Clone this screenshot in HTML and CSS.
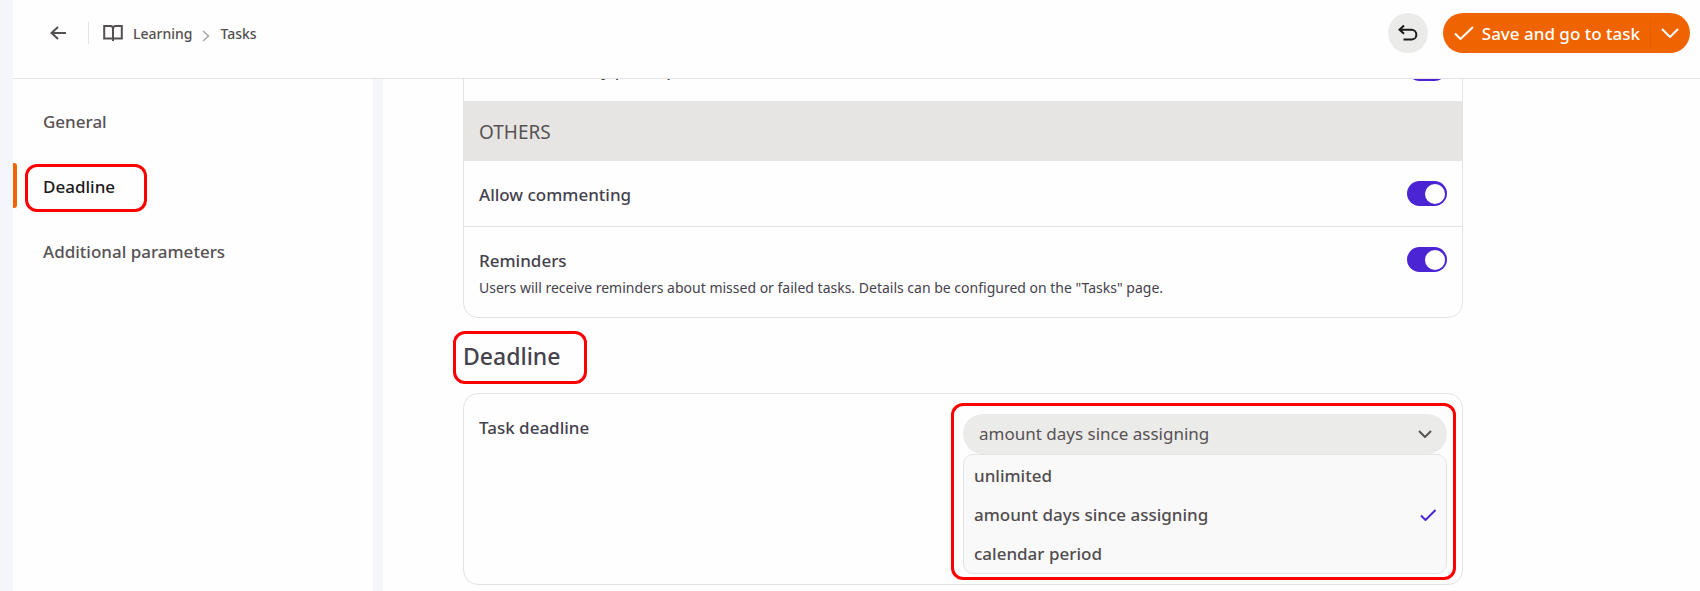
FILE: index.html
```html
<!DOCTYPE html>
<html lang="en">
<head>
    <meta charset="UTF-8">
    <meta name="viewport" content="width=device-width, initial-scale=1.0">
    <title>Tasks</title>
    <link rel="stylesheet" href="styles.css">
</head>
<body>
    <div class="page">
        <header class="header">
            <div class="header-left">
                <button class="back" type="button" aria-label="Back">
                    <svg width="16" height="14" viewBox="0 0 16 14"><path d="M16 7H1.500M8 1L1.500 7l6.500 6"/></svg>
                </button>
                <nav class="breadcrumbs" aria-label="Breadcrumbs">
                    <svg class="book" width="20" height="18" viewBox="0 0 20 18"><path d="M1.200 2H7.500a2.500 2.500 0 0 1 2.500 2.500V15.500a1.500 1.500 0 0 0-1.500-1H1.200zM18.800 2H12.500a2.500 2.500 0 0 0-2.500 2.500V15.500a1.500 1.500 0 0 1 1.500-1h7.300zM10 14.500v2.500"/></svg>
                    <a href="#">Learning</a>
                    <svg class="crumb-sep" width="8" height="12" viewBox="0 0 8 12"><path d="M1 1l5.500 5L1 11"/></svg>
                    <a href="#">Tasks</a>
                </nav>
            </div>
            <div class="header-right">
                <button class="undo" type="button" aria-label="Undo">
                    <svg width="20" height="18" viewBox="0 0 20 18"><path d="M6 1.500L1.500 5.800l4.500 4M1.500 5.800H13.500a4.800 4.800 0 0 1 0 9.700H5.500"/></svg>
                </button>
                <div class="save-group">
                    <button class="save" type="button">
                        <svg width="20" height="14" viewBox="0 0 20 14"><path d="M1 7.500l5.500 5.500L19 1"/></svg>
                        Save and go to task
                    </button>
                    <button class="save-more" type="button" aria-label="More save options">
                        <svg width="18" height="10" viewBox="0 0 18 10"><path d="M1 1l8 8 8-8"/></svg>
                    </button>
                </div>
            </div>
        </header>

        <div class="layout">
            <nav class="sidebar" aria-label="Sections">
                <a class="side-link" href="#general">General</a>
                <a class="side-link active" href="#deadline">Deadline</a>
                <a class="side-link" href="#additional">Additional parameters</a>
            </nav>

            <main class="content">
                <div class="column">
                    <!-- scrolled partly under the header -->
                    <section class="card card-scrolled">
                        <div class="row">
                            <label class="label" for="confirmation">Confirmation by participants</label>
                            <input class="toggle" type="checkbox" id="confirmation" checked>
                        </div>
                        <h3 class="group">OTHERS</h3>
                        <div class="row">
                            <label class="label" for="commenting">Allow commenting</label>
                            <input class="toggle" type="checkbox" id="commenting" checked>
                        </div>
                        <div class="row row-line">
                            <div>
                                <label class="label" for="reminders">Reminders</label>
                                <p class="hint">Users will receive reminders about missed or failed tasks. Details can be configured on the "Tasks" page.</p>
                            </div>
                            <input class="toggle" type="checkbox" id="reminders" checked>
                        </div>
                    </section>

                    <h2 class="title" id="deadline"><span class="title-mark">Deadline</span></h2>

                    <section class="card">
                        <div class="row row-select">
                            <label class="label" for="task-deadline">Task deadline</label>
                            <div class="dropdown">
                                <div class="select-box">
                                    <select class="select" id="task-deadline">
                                        <option>unlimited</option>
                                        <option selected>amount days since assigning</option>
                                        <option>calendar period</option>
                                    </select>
                                    <svg class="select-arrow" width="14" height="8" viewBox="0 0 14 8"><path d="M1 1l6 6 6-6"/></svg>
                                </div>
                                <ul class="menu">
                                    <li>unlimited</li>
                                    <li>amount days since assigning
                                        <svg width="16" height="12" viewBox="0 0 16 12"><path d="M1 6.500l4.500 4.500L15.500 1"/></svg>
                                    </li>
                                    <li>calendar period</li>
                                </ul>
                            </div>
                        </div>
                    </section>
                </div>
            </main>
        </div>
    </div>
</body>
</html>
```

FILE: styles.css
```css
*,
*::before,
*::after {
    box-sizing: border-box;
}
body {
    margin: 0;
    padding-left: 13px;
    background: #f5f6fb;
    color: #45424d;
    font-family: "Noto Sans", "Open Sans", sans-serif;
    font-size: 17px;
    line-height: 25px;
}
a {
    color: inherit;
    text-decoration: none;
}
button {
    padding: 0;
    border: none;
    background: none;
    color: inherit;
    font: inherit;
    cursor: pointer;
}
svg {
    display: block;
    flex: none;
    fill: none;
    stroke: currentColor;
    stroke-width: 2;
}
.page {
    display: flex;
    flex-direction: column;
    height: 100vh;
}

/* header */
.header {
    display: flex;
    justify-content: space-between;
    align-items: flex-start;
    height: 79px;
    padding: 13px 10px 0 37px;
    background: #fefefe;
    border-bottom: 1px solid #e3e3e3;
}
.header-left,
.header-right,
.breadcrumbs {
    display: flex;
    align-items: center;
}
.header-left {
    height: 40px;
    color: #544f51;
}
.back {
    padding-right: 22px;
}
.breadcrumbs {
    gap: 10px;
    height: 22px;
    padding-left: 14px;
    border-left: 1px solid #e3e3e3;
    font-size: 14px;
    font-weight: 500;
}
.crumb-sep {
    margin-top: 6px;
    color: #a8a5a6;
    stroke-width: 1.5;
}
.header-right {
    gap: 15px;
}
.undo {
    display: flex;
    align-items: center;
    justify-content: center;
    width: 40px;
    height: 40px;
    border-radius: 50%;
    background: #ebebe9;
    color: #1c1a1b;
}
.save-group {
    display: flex;
    align-items: center;
    height: 40px;
    padding: 0 11px;
    border-radius: 20px;
    background: #f06400;
    color: #ffffff;
    font-weight: 500;
}
.save {
    display: flex;
    align-items: center;
    gap: 8px;
    padding-right: 10px;
}
.save-more {
    height: 25px;
    padding-left: 10px;
    border-left: 1px solid #e25c00;
}

/* sidebar */
.layout {
    display: flex;
    flex: 1;
    gap: 10px;
    min-height: 0;
}
.sidebar {
    display: flex;
    flex: none;
    flex-direction: column;
    gap: 20px;
    width: 360px;
    padding-top: 19px;
    background: #fefefe;
    color: #575254;
    font-weight: 500;
}
.side-link {
    padding: 11px 30px 9px;
}
.active {
    position: relative;
    color: #1c1a1b;
}
.active::before {
    content: "";
    position: absolute;
    inset: 0 auto 0 0;
    width: 4px;
    border-radius: 0 3px 3px 0;
    background: #f06400;
}
.active::after,
.title-mark::after,
.dropdown::after {
    content: "";
    position: absolute;
    border: 3px solid #ff0000;
    border-radius: 12px;
    pointer-events: none;
}
.active::after {
    inset: 1px auto -4px 12px;
    width: 122px;
}

/* content */
.content {
    flex: 1;
    overflow: hidden;
    padding: 0 40px 0 80px;
    background: #fefefe;
}
.column {
    max-width: 1000px;
}
.card {
    overflow: hidden;
    border: 1px solid #e3e3e3;
    border-radius: 15px;
}
.card-scrolled {
    margin-top: -44px;
}
.row {
    display: flex;
    justify-content: space-between;
    align-items: flex-start;
    gap: 20px;
    min-height: 65px;
    padding: 20px 15px 16px;
}
.row-line {
    border-top: 1px solid #e3e3e3;
}
.row-select {
    padding-bottom: 10px;
}
.label {
    display: block;
    font-weight: 500;
    line-height: 27px;
}
.group {
    margin: 0 -1px;
    padding: 2px 16px 0;
    background: #e6e5e3;
    color: #575254;
    font-size: 19px;
    font-weight: 400;
    line-height: 58px;
}
.hint {
    margin: 0;
    font-size: 14px;
    line-height: 27px;
}
.toggle {
    flex: none;
    appearance: none;
    width: 40px;
    height: 25px;
    margin: 0;
    padding: 3px 2px 2px 18px;
    border-radius: 13px;
    background: #4b24d3;
    cursor: pointer;
}
.toggle::before {
    content: "";
    display: block;
    width: 20px;
    height: 20px;
    border-radius: 50%;
    background: #ffffff;
}
.title {
    margin: 0;
    padding-top: 2px;
    font-size: 23px;
    font-weight: 500;
    line-height: 73px;
}
.title-mark {
    position: relative;
}
.title-mark::after {
    inset: -9px auto auto -10px;
    width: 134px;
    height: 53px;
}

/* dropdown */
.dropdown {
    position: relative;
    width: 50%;
}
.dropdown::after {
    inset: -11px -9px -6px -12px;
}
.select-box {
    position: relative;
}
.select {
    display: block;
    appearance: none;
    width: 100%;
    height: 40px;
    padding: 0 40px 2px 16px;
    border: none;
    border-radius: 20px;
    background: #ebebe9;
    color: #575254;
    font: inherit;
}
.select-arrow {
    position: absolute;
    top: 16px;
    right: 15px;
    color: #575254;
    pointer-events: none;
}
.menu {
    margin: 0;
    padding: 1px 0 0;
    border: 1px solid #e3e3e3;
    border-radius: 10px;
    background: #f9f9f9;
    color: #514c4e;
    font-weight: 500;
    list-style: none;
}
.menu li {
    display: flex;
    align-items: center;
    justify-content: space-between;
    height: 39px;
    padding: 0 10px;
}
.menu svg {
    color: #4b24d3;
}
```
